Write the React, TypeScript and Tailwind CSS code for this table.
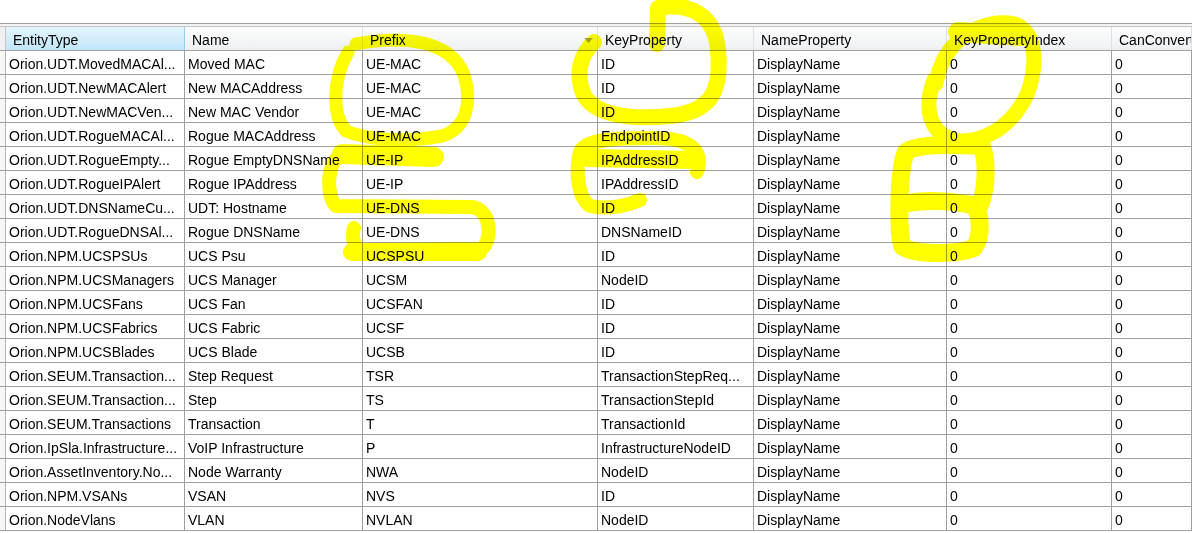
import React from "react";

const WIDTHS = [
  "w-[179px]",
  "w-[178px]",
  "w-[235px]",
  "w-[156px]",
  "w-[193px]",
  "w-[165px]",
  "flex-1",
];

const HEADERS = [
  "EntityType",
  "Name",
  "Prefix",
  "KeyProperty",
  "NameProperty",
  "KeyPropertyIndex",
  "CanConvert",
];

const ROWS: string[][] = [
  ["Orion.UDT.MovedMACAl...", "Moved MAC", "UE-MAC", "ID"],
  ["Orion.UDT.NewMACAlert", "New MACAddress", "UE-MAC", "ID"],
  ["Orion.UDT.NewMACVen...", "New MAC Vendor", "UE-MAC", "ID"],
  ["Orion.UDT.RogueMACAl...", "Rogue MACAddress", "UE-MAC", "EndpointID"],
  ["Orion.UDT.RogueEmpty...", "Rogue EmptyDNSName", "UE-IP", "IPAddressID"],
  ["Orion.UDT.RogueIPAlert", "Rogue IPAddress", "UE-IP", "IPAddressID"],
  ["Orion.UDT.DNSNameCu...", "UDT: Hostname", "UE-DNS", "ID"],
  ["Orion.UDT.RogueDNSAl...", "Rogue DNSName", "UE-DNS", "DNSNameID"],
  ["Orion.NPM.UCSPSUs", "UCS Psu", "UCSPSU", "ID"],
  ["Orion.NPM.UCSManagers", "UCS Manager", "UCSM", "NodeID"],
  ["Orion.NPM.UCSFans", "UCS Fan", "UCSFAN", "ID"],
  ["Orion.NPM.UCSFabrics", "UCS Fabric", "UCSF", "ID"],
  ["Orion.NPM.UCSBlades", "UCS Blade", "UCSB", "ID"],
  ["Orion.SEUM.Transaction...", "Step Request", "TSR", "TransactionStepReq..."],
  ["Orion.SEUM.Transaction...", "Step", "TS", "TransactionStepId"],
  ["Orion.SEUM.Transactions", "Transaction", "T", "TransactionId"],
  ["Orion.IpSla.Infrastructure...", "VoIP Infrastructure", "P", "InfrastructureNodeID"],
  ["Orion.AssetInventory.No...", "Node Warranty", "NWA", "NodeID"],
  ["Orion.NPM.VSANs", "VSAN", "NVS", "ID"],
  ["Orion.NodeVlans", "VLAN", "NVLAN", "NodeID"],
];

function HeaderRow() {
  return (
    <div className="flex h-[24px] border-b border-[#a0a0a0] bg-linear-to-b from-[#fdfdfd] to-[#eef0f3]">
      <div className="w-[6px] shrink-0 border-r border-[#c4c4c4] bg-[#f0f0f0]" />
      {HEADERS.map((h, i) => (
        <div
          key={h}
          className={`${WIDTHS[i]} shrink-0 flex items-center pt-[3px] pl-[7px] pr-[3px] whitespace-nowrap overflow-hidden border-r ${
            i === 0
              ? "bg-linear-to-b from-[#e4f4fd] to-[#c2e6fa] border-[#8fd0f0]"
              : "border-[#dde0e4]"
          }`}
        >
          <span>{h}</span>
          {i === 2 && (
            <svg width="9" height="5" viewBox="0 0 9 5" className="ml-auto mr-[1px]">
              <path d="M0 0 H9 L4.5 5 Z" fill="#a3a3a3" />
            </svg>
          )}
        </div>
      ))}
    </div>
  );
}

function DataRow({ cells }: { cells: string[] }) {
  const full = [...cells, "DisplayName", "0", "0"];
  return (
    <div className="flex h-[24px] border-b border-[#a0a0a0]">
      <div className="w-[6px] shrink-0 border-r border-[#b4b4b4] bg-[#f7f7f7]" />
      {full.map((c, i) => (
        <div
          key={i}
          className={`${WIDTHS[i]} shrink-0 flex items-center pt-[4px] pl-[3px] whitespace-nowrap overflow-hidden border-r border-[#a0a0a0]`}
        >
          {c}
        </div>
      ))}
    </div>
  );
}

// freehand highlighter marks drawn over the grid
function Scribbles() {
  return (
    <svg
      width="1192"
      height="533"
      viewBox="0 0 1192 533"
      className="absolute top-0 left-0 pointer-events-none mix-blend-multiply"
      fill="none"
      stroke="#ffff00"
      strokeLinecap="round"
      strokeLinejoin="round"
    >
      {/* Prefix */}
      <path
        strokeWidth="13"
        d="M356 44 C400 36 450 38 464 75 C472 100 468 128 442 136 C410 142 370 141 346 131 C332 116 332 80 348 52"
      />
      <path strokeWidth="20" d="M434 157 L342 154" />
      <path
        strokeWidth="14"
        d="M342 154 C326 162 326 196 336 206 L472 207 C492 210 492 240 482 249 L362 250 C352 246 352 236 354 228"
      />
      <path strokeWidth="18" d="M352 252 L478 252" />
      {/* KeyProperty */}
      <path
        strokeWidth="16"
        d="M657 44 L658 8 C690 2 715 15 718 50 C722 90 712 112 670 116 C630 120 595 115 584 95 C575 75 580 55 594 42"
      />
      <path
        strokeWidth="14"
        d="M697 172 C704 150 690 137 650 138 C610 138 585 140 580 152 C575 172 578 198 590 206 C610 210 628 205 640 200"
      />
      <path strokeWidth="18" d="M588 158 L694 160" />
      {/* KeyPropertyIndex */}
      <path
        strokeWidth="15"
        d="M936 84 C944 36 985 18 1015 24 C1042 34 1036 82 1022 104 C1006 130 982 142 958 141 C932 136 922 112 934 80"
      />
      <path strokeWidth="20" d="M958 32 L1022 36" />
      <path
        strokeWidth="18"
        d="M982 146 C950 144 915 144 906 152 C898 170 898 230 902 246 C915 256 960 254 974 248 C982 236 982 212 972 205 C950 200 920 200 904 204 M982 146 C988 165 986 190 980 205"
      />
    </svg>
  );
}

export default function App() {
  return (
    <div className="relative w-[1192px] h-[533px] overflow-hidden bg-white text-black text-[14px] font-['Liberation_Sans',Arial,sans-serif]">
      <div className="h-[23px]" />
      <div className="h-px bg-[#a0a0a0]" />
      <div className="h-[2px] bg-[#f3f3f3]" />
      <div className="h-px bg-[#c4c4c4]" />
      <HeaderRow />
      {ROWS.map((r, i) => (
        <DataRow key={i} cells={r} />
      ))}
      <Scribbles />
    </div>
  );
}
